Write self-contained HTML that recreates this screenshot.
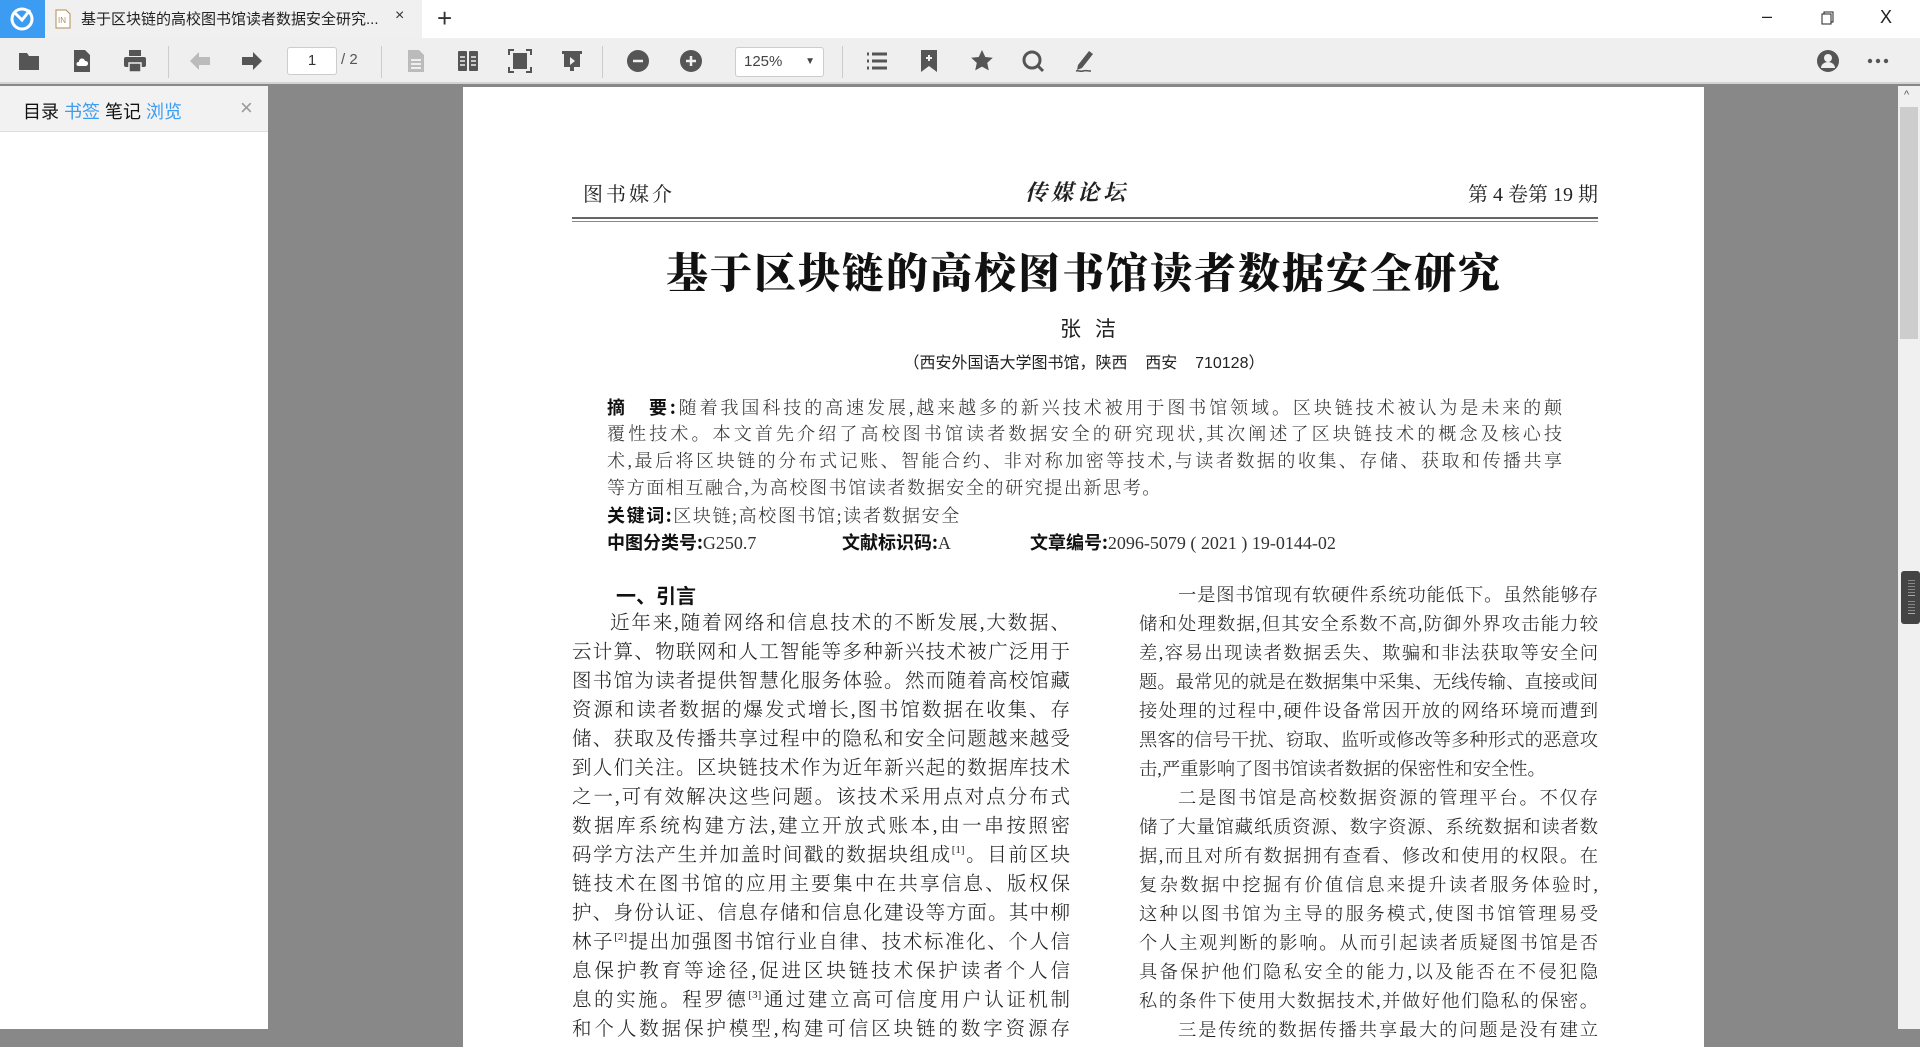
<!DOCTYPE html>
<html><head><meta charset="utf-8">
<style>
*{margin:0;padding:0;box-sizing:border-box}
body{width:1920px;height:1029px;overflow:hidden;background:#888;position:relative;font-family:"Liberation Sans","Noto Sans CJK SC",sans-serif}
.abs{position:absolute}
#tabbar{left:0;top:0;width:1920px;height:38px;background:#fff}
#logo{left:0;top:0;width:45px;height:38px;background:#3c9cf2}
#tab{left:45px;top:0;width:377px;height:38px;background:#f0f0f0}
#toolbar{left:0;top:38px;width:1920px;height:46px;background:#efefef;border-bottom:2px solid #d4d4d4}
.ic{position:absolute;top:49px;width:24px;height:24px}
.sep{position:absolute;top:46px;width:1px;height:32px;background:#ccc}
#side{left:0;top:86px;width:268px;height:943px;background:#fff}
#sidehead{left:0;top:86px;width:268px;height:46px;background:#f2f2f2;border-bottom:1px solid #ddd}
#page{left:463px;top:87px;width:1241px;height:960px;background:#fff}
#sb{left:1898px;top:86px;width:22px;height:943px;background:#f0f0f0}
.l{position:absolute;height:29px;line-height:29px;font-family:"Liberation Serif","Noto Serif CJK SC",serif;font-size:19.5px;color:#222;white-space:nowrap;text-align:justify;text-align-last:justify;font-weight:300}
.r{font-size:18.3px}
.l.n{text-align-last:left}
sup{font-size:11px;vertical-align:8px;line-height:0}
.ab{position:absolute;left:607px;width:955px;height:27px;line-height:27px;font-family:"Liberation Serif","Noto Serif CJK SC",serif;font-size:18px;color:#333;white-space:nowrap;text-align:justify;text-align-last:justify;font-weight:300}
.ab.n{text-align:left;text-align-last:left;width:auto}
.ab b{font-family:"Noto Sans CJK SC",sans-serif;font-weight:700;color:#111}
</style></head><body>
<div id="tabbar" class="abs"></div>
<div id="logo" class="abs"><svg width="45" height="38"><circle cx="22" cy="19" r="10" fill="none" stroke="#fff" stroke-width="3"/><path d="M14 12 L22 20 L30 10" fill="none" stroke="#fff" stroke-width="3"/></svg></div>
<div id="tab" class="abs">
 <svg class="abs" style="left:10px;top:9px" width="16" height="20"><path d="M1 1h10l4 4v14H1z" fill="#fff" stroke="#b58a55"/><text x="3" y="14" font-size="8" fill="#b58a55" font-family="Liberation Sans">IN</text></svg>
 <div class="abs" style="left:36px;top:8px;font-size:15px;color:#222;font-family:'Liberation Sans','Noto Sans CJK SC',sans-serif">基于区块链的高校图书馆读者数据安全研究...</div>
 <div class="abs" style="left:350px;top:7px;font-size:16px;color:#333">×</div>
</div>
<div class="abs" style="left:437px;top:3px;font-size:26px;color:#333;font-weight:300">+</div>
<div class="abs" style="left:1762px;top:6px;font-size:18px;color:#222">–</div>
<svg class="abs" style="left:1821px;top:11px" width="14" height="14"><rect x="1" y="3" width="9" height="10" fill="none" stroke="#222"/><path d="M3 3V1h9v10h-2" fill="none" stroke="#222"/></svg>
<div class="abs" style="left:1880px;top:7px;font-size:18px;color:#222">X</div>

<div id="toolbar" class="abs"></div>
<svg class="ic" style="left:17px" viewBox="0 0 24 24"><path d="M2 4h8l2 3h10v14H2z" fill="#555"/></svg>
<svg class="ic" style="left:70px" viewBox="0 0 24 24"><path d="M4 1h11l5 5v17H4z" fill="#555"/><path d="M8 17h8a2.5 2.5 0 0 0 -1-5 3 3 0 0 0 -6 1 2 2 0 0 0 -1 4z" fill="#fff"/></svg>
<svg class="ic" style="left:123px" viewBox="0 0 24 24"><rect x="6" y="1" width="12" height="6" fill="#555"/><rect x="1" y="8" width="22" height="10" rx="2" fill="#555"/><rect x="6" y="14" width="12" height="9" fill="#555" stroke="#efefef" stroke-width="1.5"/></svg>
<div class="sep" style="left:168px"></div>
<svg class="ic" style="left:188px" viewBox="0 0 24 24"><path d="M2 12l9-9v5h11v8H11v5z" fill="#bbb"/></svg>
<svg class="ic" style="left:240px" viewBox="0 0 24 24"><path d="M22 12l-9-9v5H2v8h11v5z" fill="#555"/></svg>
<div class="abs" style="left:287px;top:47px;width:50px;height:28px;background:#fff;border:1px solid #ccc;border-radius:3px;text-align:center;line-height:26px;font-size:15px;color:#333">1</div>
<div class="abs" style="left:341px;top:51px;font-size:15px;color:#555">/ 2</div>
<div class="sep" style="left:381px"></div>
<svg class="ic" style="left:404px" viewBox="0 0 24 24"><path d="M4 1h11l5 5v17H4z" fill="#bbb"/><path d="M7 11h10M7 15h10M7 19h10" stroke="#efefef" stroke-width="2"/></svg>
<svg class="ic" style="left:456px" viewBox="0 0 24 24"><rect x="2" y="2" width="9" height="20" rx="1" fill="#555"/><rect x="13" y="2" width="9" height="20" rx="1" fill="#555"/><path d="M4 8h5M4 12h5M4 16h5M15 8h5M15 12h5M15 16h5" stroke="#efefef" stroke-width="1.5"/></svg>
<svg class="ic" style="left:508px" viewBox="0 0 24 24"><path d="M1 6V1h5M18 1h5v5M23 18v5h-5M6 23H1v-5" fill="none" stroke="#555" stroke-width="2"/><rect x="5" y="4" width="14" height="16" fill="#555"/></svg>
<svg class="ic" style="left:560px" viewBox="0 0 24 24"><path d="M2 2h20v3h-2v13h-6v4h-4v-4H4V5H2z" fill="#555"/><path d="M10 8l5 4-5 4z" fill="#efefef"/></svg>
<div class="sep" style="left:602px"></div>
<svg class="ic" style="left:626px" viewBox="0 0 24 24"><circle cx="12" cy="12" r="11" fill="#555"/><path d="M7 12h10" stroke="#efefef" stroke-width="2.5"/></svg>
<svg class="ic" style="left:679px" viewBox="0 0 24 24"><circle cx="12" cy="12" r="11" fill="#555"/><path d="M7 12h10M12 7v10" stroke="#efefef" stroke-width="2.5"/></svg>
<div class="abs" style="left:735px;top:47px;width:89px;height:30px;background:#fff;border:1px solid #ccc;border-radius:3px;font-size:15px;color:#444;line-height:28px;padding-left:8px">125%<span style="position:absolute;right:8px;font-size:10px">▼</span></div>
<div class="sep" style="left:842px"></div>
<svg class="ic" style="left:865px" viewBox="0 0 24 24"><path d="M2 5h2M2 12h2M2 19h2M7 5h15M7 12h15M7 19h15" stroke="#555" stroke-width="3"/></svg>
<svg class="ic" style="left:917px" viewBox="0 0 24 24"><path d="M4 1h16v22l-8-6-8 6z" fill="#555"/><path d="M9 9h6M12 6v6" stroke="#efefef" stroke-width="2"/></svg>
<svg class="ic" style="left:970px" viewBox="0 0 24 24"><path d="M12 1l3.3 7 7.5.8-5.6 5.1 1.6 7.5L12 17.6 5.2 21.4l1.6-7.5L1.2 8.8 8.7 8z" fill="#555"/></svg>
<svg class="ic" style="left:1021px" viewBox="0 0 24 24"><circle cx="11" cy="11" r="8" fill="none" stroke="#555" stroke-width="3"/><path d="M16 16l6 6" stroke="#555" stroke-width="3"/></svg>
<svg class="ic" style="left:1073px" viewBox="0 0 24 24"><path d="M16 2l4 3-11 14-5 2 1-5z" fill="#555"/><path d="M3 22c3-1 4 1 7 0s4 0 8 0" fill="none" stroke="#555" stroke-width="1.5"/></svg>
<svg class="ic" style="left:1816px" viewBox="0 0 24 24"><circle cx="12" cy="12" r="11" fill="#555"/><circle cx="12" cy="9" r="4" fill="#efefef"/><path d="M5 19a7 6 0 0 1 14 0" fill="#efefef"/></svg>
<svg class="ic" style="left:1866px" viewBox="0 0 24 24"><circle cx="4" cy="12" r="2.2" fill="#555"/><circle cx="12" cy="12" r="2.2" fill="#555"/><circle cx="20" cy="12" r="2.2" fill="#555"/></svg>

<div id="side" class="abs"></div>
<div id="sidehead" class="abs">
 <div class="abs" style="left:23px;top:12px;font-size:18px;color:#111;font-family:'Liberation Sans','Noto Sans CJK SC',sans-serif">目录 <span style="color:#3b9cf0">书签</span> 笔记 <span style="color:#3b9cf0">浏览</span></div>
 <div class="abs" style="left:240px;top:9px;font-size:22px;color:#999;font-weight:300">×</div>
</div>

<div id="sb" class="abs">
 <div class="abs" style="left:6px;top:3px;font-size:11px;color:#555">^</div>
 <div class="abs" style="left:2px;top:21px;width:18px;height:232px;background:#cdcdcd"></div>
 <div class="abs" style="left:3px;top:485px;width:19px;height:53px;background:#444;border-radius:3px"></div>
 <div class="abs" style="left:10px;top:494px;width:7px;height:1px;background:#888;box-shadow:0 3px #888,0 6px #888,0 9px #888,0 12px #888,0 15px #e8a030,0 21px #888,0 24px #888,0 27px #888,0 30px #888,0 33px #9c3"></div>
</div>

<div id="page" class="abs"></div>
<div class="abs" style="left:583px;top:178px;font-size:20px;color:#222;font-family:'Liberation Serif','Noto Serif CJK SC',serif;letter-spacing:3px">图书媒介</div>
<div class="abs" style="left:1025px;top:176px;font-size:22px;color:#222;font-family:'Noto Serif CJK SC',serif;font-style:italic;letter-spacing:4px;font-weight:700">传媒论坛</div>
<div class="abs" style="left:1450px;top:178px;width:148px;font-size:20px;color:#222;font-family:'Liberation Serif','Noto Serif CJK SC',serif;text-align:right">第 4 卷第 19 期</div>
<div class="abs" style="left:572px;top:217px;width:1026px;height:5px;border-top:2px solid #666;border-bottom:1px solid #888"></div>
<div class="abs" style="left:571px;top:243px;width:1026px;text-align:center;font-size:42px;font-weight:900;color:#111;font-family:'Noto Serif CJK SC',serif;letter-spacing:2px;line-height:56px">基于区块链的高校图书馆读者数据安全研究</div>
<div class="abs" style="left:571px;top:314px;width:1026px;text-align:center;font-size:21px;color:#222;font-family:'Noto Sans CJK SC',sans-serif;line-height:28px;padding-left:8px">张&nbsp;&nbsp;&nbsp;洁</div>
<div class="abs" style="left:571px;top:352px;width:1026px;text-align:center;font-size:16px;color:#222;font-family:'Liberation Sans','Noto Sans CJK SC',sans-serif;line-height:24px">（西安外国语大学图书馆，陕西&nbsp;&nbsp;&nbsp;&nbsp;西安&nbsp;&nbsp;&nbsp;&nbsp;710128）</div>
<div class="ab" style="top:394px"><b>摘&nbsp;&nbsp;&nbsp;要:</b>随着我国科技的高速发展,越来越多的新兴技术被用于图书馆领域。区块链技术被认为是未来的颠</div>
<div class="ab" style="top:421px">覆性技术。本文首先介绍了高校图书馆读者数据安全的研究现状,其次阐述了区块链技术的概念及核心技</div>
<div class="ab" style="top:448px">术,最后将区块链的分布式记账、智能合约、非对称加密等技术,与读者数据的收集、存储、获取和传播共享</div>
<div class="ab n" style="top:475px;letter-spacing:1.6px">等方面相互融合,为高校图书馆读者数据安全的研究提出新思考。</div>
<div class="ab n" style="top:502px;letter-spacing:1.6px"><b>关键词:</b>区块链;高校图书馆;读者数据安全</div>
<div class="ab n" style="top:529px"><b>中图分类号:</b>G250.7</div>
<div class="ab n" style="top:529px;left:842px"><b>文献标识码:</b>A</div>
<div class="ab n" style="top:529px;left:1030px"><b>文章编号:</b>2096-5079 ( 2021 ) 19-0144-02</div>
<div class="abs" style="left:616px;top:580px;font-size:20px;font-weight:700;color:#111;font-family:'Noto Sans CJK SC',sans-serif;line-height:30px">一、引言</div>
<div class="l" style="left:610px;width:460px;top:609px">近年来,随着网络和信息技术的不断发展,大数据、</div>
<div class="l" style="left:572px;width:498px;top:638px">云计算、物联网和人工智能等多种新兴技术被广泛用于</div>
<div class="l" style="left:572px;width:498px;top:667px">图书馆为读者提供智慧化服务体验。然而随着高校馆藏</div>
<div class="l" style="left:572px;width:498px;top:696px">资源和读者数据的爆发式增长,图书馆数据在收集、存</div>
<div class="l" style="left:572px;width:498px;top:725px">储、获取及传播共享过程中的隐私和安全问题越来越受</div>
<div class="l" style="left:572px;width:498px;top:754px">到人们关注。区块链技术作为近年新兴起的数据库技术</div>
<div class="l" style="left:572px;width:498px;top:783px">之一,可有效解决这些问题。该技术采用点对点分布式</div>
<div class="l" style="left:572px;width:498px;top:812px">数据库系统构建方法,建立开放式账本,由一串按照密</div>
<div class="l" style="left:572px;width:498px;top:841px">码学方法产生并加盖时间戳的数据块组成<sup>[1]</sup>。目前区块</div>
<div class="l" style="left:572px;width:498px;top:870px">链技术在图书馆的应用主要集中在共享信息、版权保</div>
<div class="l" style="left:572px;width:498px;top:899px">护、身份认证、信息存储和信息化建设等方面。其中柳</div>
<div class="l" style="left:572px;width:498px;top:928px">林子<sup>[2]</sup>提出加强图书馆行业自律、技术标准化、个人信</div>
<div class="l" style="left:572px;width:498px;top:957px">息保护教育等途径,促进区块链技术保护读者个人信</div>
<div class="l" style="left:572px;width:498px;top:986px">息的实施。程罗德<sup>[3]</sup>通过建立高可信度用户认证机制</div>
<div class="l" style="left:572px;width:498px;top:1015px">和个人数据保护模型,构建可信区块链的数字资源存</div>
<div class="l r" style="left:1178px;width:420px;top:581px">一是图书馆现有软硬件系统功能低下。虽然能够存</div>
<div class="l r" style="left:1139px;width:459px;top:610px">储和处理数据,但其安全系数不高,防御外界攻击能力较</div>
<div class="l r" style="left:1139px;width:459px;top:639px">差,容易出现读者数据丢失、欺骗和非法获取等安全问</div>
<div class="l r" style="left:1139px;width:459px;top:668px">题。最常见的就是在数据集中采集、无线传输、直接或间</div>
<div class="l r" style="left:1139px;width:459px;top:697px">接处理的过程中,硬件设备常因开放的网络环境而遭到</div>
<div class="l r" style="left:1139px;width:459px;top:726px">黑客的信号干扰、窃取、监听或修改等多种形式的恶意攻</div>
<div class="l r n" style="left:1139px;width:459px;top:755px">击,严重影响了图书馆读者数据的保密性和安全性。</div>
<div class="l r" style="left:1178px;width:420px;top:784px">二是图书馆是高校数据资源的管理平台。不仅存</div>
<div class="l r" style="left:1139px;width:459px;top:813px">储了大量馆藏纸质资源、数字资源、系统数据和读者数</div>
<div class="l r" style="left:1139px;width:459px;top:842px">据,而且对所有数据拥有查看、修改和使用的权限。在</div>
<div class="l r" style="left:1139px;width:459px;top:871px">复杂数据中挖掘有价值信息来提升读者服务体验时,</div>
<div class="l r" style="left:1139px;width:459px;top:900px">这种以图书馆为主导的服务模式,使图书馆管理易受</div>
<div class="l r" style="left:1139px;width:459px;top:929px">个人主观判断的影响。从而引起读者质疑图书馆是否</div>
<div class="l r" style="left:1139px;width:459px;top:958px">具备保护他们隐私安全的能力,以及能否在不侵犯隐</div>
<div class="l r" style="left:1139px;width:459px;top:987px">私的条件下使用大数据技术,并做好他们隐私的保密。</div>
<div class="l r" style="left:1178px;width:420px;top:1016px">三是传统的数据传播共享最大的问题是没有建立</div>
</body></html>
